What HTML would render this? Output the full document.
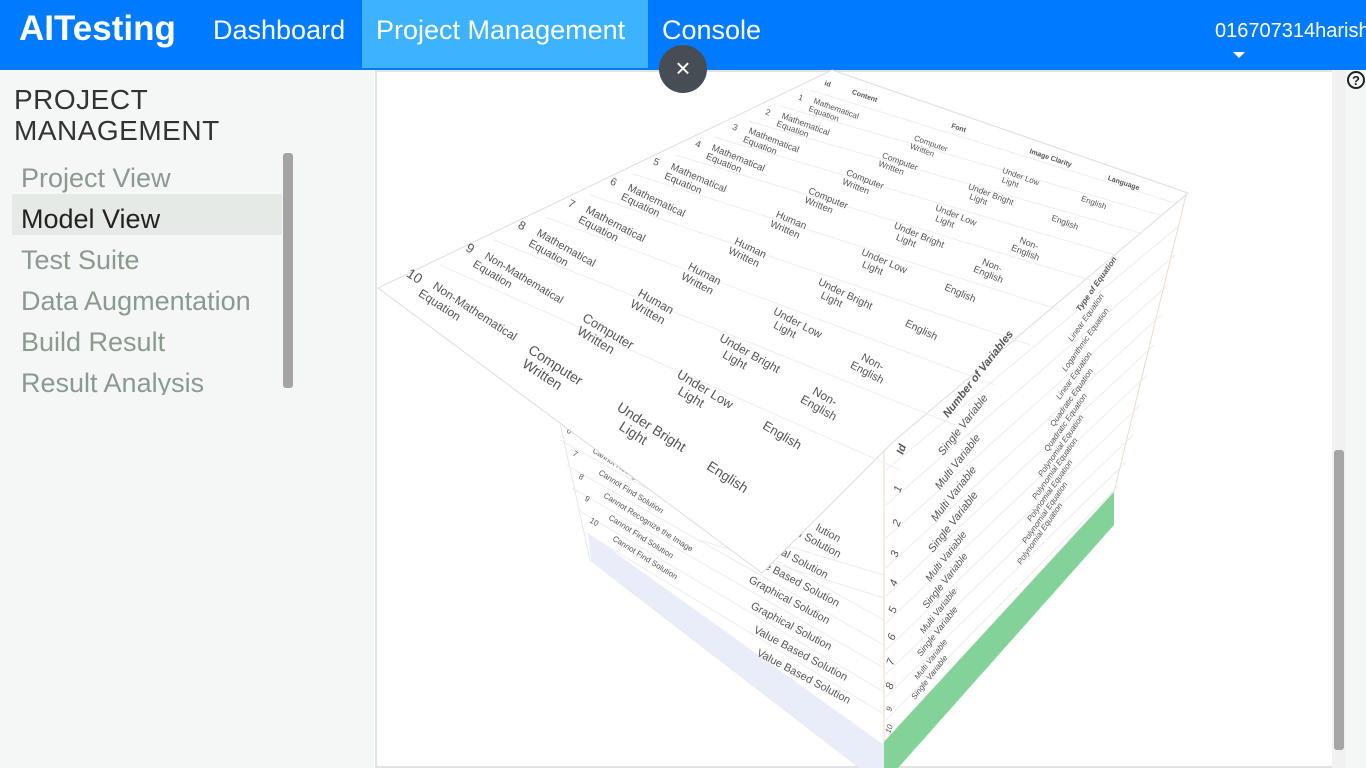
<!DOCTYPE html>
<html><head><meta charset="utf-8"><style>
*{margin:0;padding:0;box-sizing:border-box}
body{width:1366px;height:768px;overflow:hidden;background:#fff;font-family:"Liberation Sans",sans-serif;position:relative}
.hdr{position:absolute;left:0;top:0;width:1366px;height:70px;background:#007bff;color:#fff}
.hdr .logo{position:absolute;left:19px;top:9px;font-size:35px;font-weight:bold}
.hdr .nav{position:absolute;top:15px;font-size:27px}
.act{position:absolute;left:362px;top:0;width:286px;height:68px;background:#3db3ff}
.user{position:absolute;left:1215px;top:20px;font-size:20px;white-space:nowrap}
.caret{position:absolute;left:1233px;top:52px;width:0;height:0;border-left:6px solid transparent;border-right:6px solid transparent;border-top:6px solid #fff}
.side{position:absolute;left:0;top:70px;width:374px;height:698px;background:#f5f7f6}
.side h2{position:absolute;left:14px;top:14px;font-weight:normal;font-size:28px;line-height:31px;color:#333;letter-spacing:0.5px}
.list{position:absolute;left:0;top:83px;width:300px;height:242px;overflow:hidden}
.side .it{position:absolute;left:12px;width:270px;height:41px;font-size:27px;color:#8b9990;padding-left:9px;padding-top:9px;line-height:32px;white-space:nowrap}
.side .sel{background:#e5eae6;color:#222}
.sb{position:absolute;left:283px;top:83px;width:10px;height:235px;background:#a4a4a4;border-radius:3px}
.main{position:absolute;left:375px;top:70px;width:959px;height:698px;border:2px solid #e2e2e2;border-right:none;background:#fff}
.rtrack{position:absolute;left:1332px;top:70px;width:14px;height:698px;background:#f1f1f1}
.rthumb{position:absolute;left:1334px;top:450px;width:10px;height:300px;background:#a6a6a6;border-radius:3px}
.rstrip{position:absolute;left:1346px;top:70px;width:20px;height:698px;background:#f5f7f6}
.help{position:absolute;left:1347px;top:71px;width:18px;height:18px;border:2px solid #222;border-radius:50%;font-size:13px;font-weight:bold;text-align:center;line-height:15px;color:#222}
.close{position:absolute;left:659px;top:45px;width:48px;height:48px;border-radius:50%;background:#474d54;color:#fff;font-size:26px;text-align:center;line-height:46px}
svg{position:absolute;left:0;top:0}
</style></head><body>
<div class="hdr">
<div class="act"></div>
<div class="logo">AITesting</div>
<div class="nav" style="left:213px">Dashboard</div>
<div class="nav" style="left:376px">Project Management</div>
<div class="nav" style="left:662px">Console</div>
<div class="user">016707314harish</div>
<div class="caret"></div>
</div>
<div class="side">
<h2>PROJECT<br>MANAGEMENT</h2>
<div class="list">
<div class="it" style="top:0">Project View</div>
<div class="it sel" style="top:41px">Model View</div>
<div class="it" style="top:82px">Test Suite</div>
<div class="it" style="top:123px">Data Augmentation</div>
<div class="it" style="top:164px">Build Result</div>
<div class="it" style="top:205px">Result Analysis</div>
</div>
<div class="sb"></div>
</div>
<div class="main"></div>
<div class="rtrack"></div><div class="rthumb"></div>
<div class="rstrip"></div><div class="help">?</div>

<svg width="1366" height="768" viewBox="0 0 1366 768" font-family="Liberation Sans, sans-serif" fill="#555">
<!-- left face -->
<polygon points="555,400 884,440 884,768 860,768 590,560" fill="#fff" stroke="#e6e6e6"/>
<polygon points="588,533 884,745 884,768 860,768 591,560" fill="#e9edf9"/>
<g stroke="#ececec">
<line x1="560" y1="440" x2="884" y2="620"/><line x1="566" y1="465" x2="884" y2="645"/>
<line x1="572" y1="488" x2="884" y2="668"/><line x1="578" y1="510" x2="884" y2="692"/>
<line x1="584" y1="532" x2="884" y2="714"/><line x1="700" y1="520" x2="884" y2="575"/>
<line x1="700" y1="540" x2="884" y2="598"/>
</g>
<g font-size="8">
<text x="566" y="432" transform="rotate(30 566 432)">6</text>
<text x="572" y="455" transform="rotate(30 572 455)">7</text>
<text x="578" y="478" transform="rotate(30 578 478)">8</text>
<text x="584" y="500" transform="rotate(30 584 500)">9</text>
<text x="589" y="522" transform="rotate(30 589 522)">10</text>
<text x="592" y="452" transform="rotate(32 592 452)">Cannot Recognize the Image</text>
<text x="598" y="474" transform="rotate(32 598 474)">Cannot Find Solution</text>
<text x="603" y="497" transform="rotate(32 603 497)">Cannot Recognize the Image</text>
<text x="608" y="519" transform="rotate(32 608 519)">Cannot Find Solution</text>
<text x="612" y="540" transform="rotate(32 612 540)">Cannot Find Solution</text>
</g>
<g font-size="11">
<text x="815" y="530" transform="rotate(28 815 530)">lution</text>
<text x="790" y="532" transform="rotate(28 790 532)">ed Solution</text>
<text x="768" y="548" transform="rotate(28 768 548)">hical Solution</text>
<text x="745" y="558" transform="rotate(28 745 558)">Value Based Solution</text>
<text x="748" y="582" transform="rotate(28 748 582)">Graphical Solution</text>
<text x="750" y="608" transform="rotate(28 750 608)">Graphical Solution</text>
<text x="753" y="632" transform="rotate(28 753 632)">Value Based Solution</text>
<text x="756" y="655" transform="rotate(28 756 655)">Value Based Solution</text>
</g>
<!-- right face -->
<polygon points="884,445 1186,195 1114,492 884,742" fill="#fff" stroke="#eadbd0"/>
<polygon points="1114,492 1114,525 898,768 884,768 884,742" fill="#82d29a"/>
<g stroke="#ececec">
<line x1="886" y1="470" x2="1180" y2="225"/><line x1="886" y1="505" x2="1175" y2="255"/>
<line x1="886" y1="538" x2="1168" y2="285"/><line x1="886" y1="568" x2="1161" y2="315"/>
<line x1="886" y1="596" x2="1154" y2="345"/><line x1="886" y1="623" x2="1147" y2="375"/>
<line x1="886" y1="650" x2="1140" y2="405"/><line x1="886" y1="674" x2="1133" y2="435"/>
<line x1="886" y1="697" x2="1126" y2="462"/><line x1="886" y1="720" x2="1119" y2="485"/>
</g>
<g font-size="11" font-style="italic">
<text x="903" y="455" font-weight="bold" transform="rotate(-70 903 455)">Id</text>
<text x="900" y="493" transform="rotate(-70 900 493)">1</text>
<text x="899" y="527" transform="rotate(-70 899 527)">2</text>
<text x="897" y="558" transform="rotate(-70 897 558)">3</text>
<text x="896" y="587" transform="rotate(-70 896 587)">4</text>
<text x="895" y="614" transform="rotate(-70 895 614)">5</text>
<text x="894" y="641" transform="rotate(-70 894 641)">6</text>
<text x="893" y="666" transform="rotate(-70 893 666)">7</text>
<text x="892" y="690" transform="rotate(-70 892 690)">8</text>
<text x="891" y="712" font-size="8" transform="rotate(-70 891 712)">9</text>
<text x="890" y="734" font-size="8" transform="rotate(-70 890 734)">10</text>
<text x="943" y="456" transform="rotate(-52 943 456)">Single Variable</text>
<text x="940" y="490" transform="rotate(-52 940 490)">Multi Variable</text>
<text x="936" y="522" transform="rotate(-52 936 522)">Multi Variable</text>
<text x="933" y="553" transform="rotate(-52 933 553)">Single Variable</text>
<text x="930" y="582" font-size="10" transform="rotate(-52 930 582)">Multi Variable</text>
<text x="927" y="609" font-size="10" transform="rotate(-52 927 609)">Single Variable</text>
<text x="924" y="634" font-size="9" transform="rotate(-52 924 634)">Multi Variable</text>
<text x="921" y="657" font-size="9" transform="rotate(-52 921 657)">Single Variable</text>
<text x="918" y="680" font-size="8" transform="rotate(-52 918 680)">Multi Variable</text>
<text x="915" y="700" font-size="8" transform="rotate(-52 915 700)">Single Variable</text>
</g>
<g font-size="8" font-style="italic">
<text x="1080" y="312" font-weight="bold" transform="rotate(-55 1080 312)">Type of Equation</text>
<text x="1072" y="342" transform="rotate(-55 1072 342)">Linear Equation</text>
<text x="1066" y="372" transform="rotate(-55 1066 372)">Logarithmic Equation</text>
<text x="1060" y="400" transform="rotate(-55 1060 400)">Linear Equation</text>
<text x="1054" y="427" transform="rotate(-55 1054 427)">Quadratic Equation</text>
<text x="1048" y="452" transform="rotate(-55 1048 452)">Quadratic Equation</text>
<text x="1042" y="477" transform="rotate(-55 1042 477)">Polynomial Equation</text>
<text x="1036" y="500" transform="rotate(-55 1036 500)">Polynomial Equation</text>
<text x="1031" y="522" transform="rotate(-55 1031 522)">Polynomial Equation</text>
<text x="1026" y="544" transform="rotate(-55 1026 544)">Polynomial Equation</text>
<text x="1021" y="565" transform="rotate(-55 1021 565)">Polynomial Equation</text>
</g>
<!-- top sheet -->
<polygon points="832,70 1188,193 893,442 762,573 378,288" fill="#fff" stroke="#dcdce4"/>
<g stroke="#ededed">
<line x1="810" y1="90" x2="1175" y2="203"/><line x1="780" y1="106" x2="1160" y2="215"/>
<line x1="748" y1="121" x2="1140" y2="233"/><line x1="714" y1="137" x2="1115" y2="255"/>
<line x1="676" y1="155" x2="1090" y2="280"/><line x1="633" y1="174" x2="1060" y2="310"/>
<line x1="590" y1="195" x2="1030" y2="345"/><line x1="545" y1="217" x2="995" y2="385"/>
<line x1="494" y1="240" x2="955" y2="425"/><line x1="440" y1="265" x2="900" y2="470"/>
</g>
<text x="948" y="418" font-size="11" font-style="italic" font-weight="bold" transform="rotate(-52 948 418)">Number of Variables</text>
<g text-anchor="middle">
<g font-size="7" font-weight="bold"><text transform="translate(827 86) rotate(18.5)">id</text><text transform="translate(864 98) rotate(18.5)">Content</text><text transform="translate(958 130) rotate(18.5)">Font</text><text transform="translate(1050 160) rotate(18.5)">Image Clarity</text><text transform="translate(1123 185) rotate(18.5)">Language</text></g>
<g font-size="8"><text transform="translate(800 100) rotate(19.7)">1</text><text text-anchor="start" transform="translate(813 103) rotate(19.7)">Mathematical<tspan x="-2" dy="9">Equation</tspan></text><text transform="translate(930 146) rotate(19.7)">Computer<tspan x="-6" dy="9">Written</tspan></text><text transform="translate(1020 179) rotate(19.7)">Under Low<tspan x="-8" dy="9">Light</tspan></text><text transform="translate(1093 205) rotate(19.7)">English</text></g>
<g font-size="8.5"><text transform="translate(767 115) rotate(20.3)">2</text><text text-anchor="start" transform="translate(781 118) rotate(20.3)">Mathematical<tspan x="-2" dy="9">Equation</tspan></text><text transform="translate(899 164) rotate(20.3)">Computer<tspan x="-6" dy="9">Written</tspan></text><text transform="translate(990 197) rotate(20.3)">Under Bright<tspan x="-10" dy="9">Light</tspan></text><text transform="translate(1064 225) rotate(20.3)">English</text></g>
<g font-size="9"><text transform="translate(734 130) rotate(21.6)">3</text><text text-anchor="start" transform="translate(748 133) rotate(21.6)">Mathematical<tspan x="-2" dy="10">Equation</tspan></text><text transform="translate(864 182) rotate(21.6)">Computer<tspan x="-6" dy="10">Written</tspan></text><text transform="translate(955 218) rotate(21.6)">Under Low<tspan x="-8" dy="10">Light</tspan></text><text transform="translate(1028 246) rotate(21.6)">Non-<tspan x="0" dy="10">English</tspan></text></g>
<g font-size="9.5"><text transform="translate(697 147) rotate(22.4)">4</text><text text-anchor="start" transform="translate(711 150) rotate(22.4)">Mathematical<tspan x="-2" dy="10">Equation</tspan></text><text transform="translate(827 201) rotate(22.4)">Computer<tspan x="-6" dy="10">Written</tspan></text><text transform="translate(918 238) rotate(22.4)">Under Bright<tspan x="-10" dy="10">Light</tspan></text><text transform="translate(991 268) rotate(22.4)">Non-<tspan x="0" dy="10">English</tspan></text></g>
<g font-size="10"><text transform="translate(655 165) rotate(23.3)">5</text><text text-anchor="start" transform="translate(670 169) rotate(23.3)">Mathematical<tspan x="-2" dy="11">Equation</tspan></text><text transform="translate(790 223) rotate(23.3)">Human<tspan x="-2" dy="11">Written</tspan></text><text transform="translate(883 264) rotate(23.3)">Under Low<tspan x="-8" dy="11">Light</tspan></text><text transform="translate(959 296) rotate(23.3)">English</text></g>
<g font-size="10.5"><text transform="translate(612 185) rotate(25.7)">6</text><text text-anchor="start" transform="translate(627 190) rotate(25.7)">Mathematical<tspan x="-2" dy="11">Equation</tspan></text><text transform="translate(749 251) rotate(25.7)">Human<tspan x="-2" dy="11">Written</tspan></text><text transform="translate(844 297) rotate(25.7)">Under Bright<tspan x="-10" dy="11">Light</tspan></text><text transform="translate(920 333) rotate(25.7)">English</text></g>
<g font-size="11"><text transform="translate(570 207) rotate(27.7)">7</text><text text-anchor="start" transform="translate(585 212) rotate(27.7)">Mathematical<tspan x="-2" dy="12">Equation</tspan></text><text transform="translate(703 277) rotate(27.7)">Human<tspan x="-2" dy="12">Written</tspan></text><text transform="translate(796 326) rotate(27.7)">Under Low<tspan x="-8" dy="12">Light</tspan></text><text transform="translate(871 365) rotate(27.7)">Non-<tspan x="0" dy="12">English</tspan></text></g>
<g font-size="12"><text transform="translate(520 229) rotate(29.4)">8</text><text text-anchor="start" font-size="11" transform="translate(536 235) rotate(29.4)">Mathematical<tspan x="-2" dy="13">Equation</tspan></text><text transform="translate(654 305) rotate(29.4)">Human<tspan x="-2" dy="13">Written</tspan></text><text transform="translate(748 357) rotate(29.4)">Under Bright<tspan x="-10" dy="13">Light</tspan></text><text transform="translate(823 400) rotate(29.4)">Non-<tspan x="0" dy="13">English</tspan></text></g>
<g font-size="13"><text transform="translate(468 252) rotate(31)">9</text><text text-anchor="start" font-size="11" transform="translate(484 258) rotate(31)">Non-Mathematical<tspan x="-6" dy="13">Equation</tspan></text><text transform="translate(606 335) rotate(31)">Computer<tspan x="-6" dy="14">Written</tspan></text><text transform="translate(703 393) rotate(31)">Under Low<tspan x="-8" dy="14">Light</tspan></text><text transform="translate(780 439) rotate(31)">English</text></g>
<g font-size="14"><text transform="translate(412 280) rotate(33)">10</text><text text-anchor="start" font-size="12" transform="translate(432 288) rotate(33)">Non-Mathematical<tspan x="-8" dy="14">Equation</tspan></text><text transform="translate(553 369) rotate(33)">Computer<tspan x="-6" dy="15">Written</tspan></text><text transform="translate(649 431) rotate(33)">Under Bright<tspan x="-12" dy="15">Light</tspan></text><text transform="translate(725 481) rotate(33)">English</text></g>
</g>
</svg>
<div class="close">×</div>
</body></html>
